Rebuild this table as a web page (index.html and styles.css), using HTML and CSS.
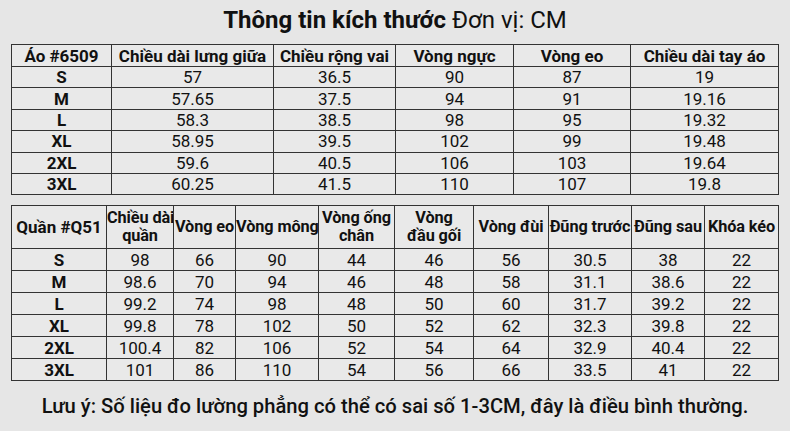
FILE: index.html
```html
<!DOCTYPE html>
<html lang="vi">
<head>
<meta charset="utf-8">
<link rel="stylesheet" href="styles.css">
</head>
<body>
<div class="page">
  <h1 class="title"><b>Thông tin kích thước</b> Đơn vị: CM</h1>

  <table class="size t1">
    <colgroup>
      <col class="a1"><col class="a2"><col class="a3"><col class="a4"><col class="a5"><col class="a6">
    </colgroup>
    <thead>
      <tr><th>Áo #6509</th><th>Chiều dài lưng giữa</th><th>Chiều rộng vai</th><th>Vòng ngực</th><th>Vòng eo</th><th>Chiều dài tay áo</th></tr>
    </thead>
    <tbody>
      <tr><th>S</th><td>57</td><td>36.5</td><td>90</td><td>87</td><td>19</td></tr>
      <tr><th>M</th><td>57.65</td><td>37.5</td><td>94</td><td>91</td><td>19.16</td></tr>
      <tr><th>L</th><td>58.3</td><td>38.5</td><td>98</td><td>95</td><td>19.32</td></tr>
      <tr><th>XL</th><td>58.95</td><td>39.5</td><td>102</td><td>99</td><td>19.48</td></tr>
      <tr><th>2XL</th><td>59.6</td><td>40.5</td><td>106</td><td>103</td><td>19.64</td></tr>
      <tr><th>3XL</th><td>60.25</td><td>41.5</td><td>110</td><td>107</td><td>19.8</td></tr>
    </tbody>
  </table>

  <table class="size t2">
    <colgroup>
      <col class="b1"><col class="b2"><col class="b3"><col class="b4"><col class="b5"><col class="b6"><col class="b7"><col class="b8"><col class="b9"><col class="b10">
    </colgroup>
    <thead>
      <tr><th class="lead">Quần #Q51</th><th>Chiều dài<br>quần</th><th>Vòng eo</th><th>Vòng mông</th><th>Vòng ống<br>chân</th><th>Vòng<br>đầu gối</th><th>Vòng đùi</th><th>Đũng trước</th><th>Đũng sau</th><th>Khóa kéo</th></tr>
    </thead>
    <tbody>
      <tr><th>S</th><td>98</td><td>66</td><td>90</td><td>44</td><td>46</td><td>56</td><td>30.5</td><td>38</td><td>22</td></tr>
      <tr><th>M</th><td>98.6</td><td>70</td><td>94</td><td>46</td><td>48</td><td>58</td><td>31.1</td><td>38.6</td><td>22</td></tr>
      <tr><th>L</th><td>99.2</td><td>74</td><td>98</td><td>48</td><td>50</td><td>60</td><td>31.7</td><td>39.2</td><td>22</td></tr>
      <tr><th>XL</th><td>99.8</td><td>78</td><td>102</td><td>50</td><td>52</td><td>62</td><td>32.3</td><td>39.8</td><td>22</td></tr>
      <tr><th>2XL</th><td>100.4</td><td>82</td><td>106</td><td>52</td><td>54</td><td>64</td><td>32.9</td><td>40.4</td><td>22</td></tr>
      <tr><th>3XL</th><td>101</td><td>86</td><td>110</td><td>54</td><td>56</td><td>66</td><td>33.5</td><td>41</td><td>22</td></tr>
    </tbody>
  </table>

  <p class="note">Lưu ý: Số liệu đo lường phẳng có thể có sai số 1-3CM, đây là điều bình thường.</p>
</div>
</body>
</html>
```

FILE: styles.css
```css
html, body {
  margin: 0;
  padding: 0;
  background: #e6e6e6;
}
body {
  font-family: Roboto, "Noto Sans", "DejaVu Sans", sans-serif;
  color: #111;
  width: 790px;
  height: 431px;
  overflow: hidden;
}
.page {
  display: flex;
  flex-direction: column;
  padding: 0 0 0 11px;
}
.title {
  margin: 0;
  height: 44px;
  box-sizing: border-box;
  padding-top: 5px;
  padding-right: 11px;
  text-align: center;
  font-size: 24px;
  font-weight: 400;
  line-height: 30px;
  color: #111;
}
.title b {
  font-weight: 700;
}
.size {
  border-collapse: collapse;
  table-layout: fixed;
  width: 768px;
  background: #e9e9e9;
  border: 1.5px solid #555;
}
.size th, .size td {
  border: 1px solid #333;
  padding: 0;
  text-align: center;
  white-space: nowrap;
  overflow: hidden;
}
.size th {
  font-weight: 700;
  font-size: 17px;
}
.size td {
  font-weight: 400;
  font-size: 17px;
}
.t1 tr { height: 21.4px; }
.t1 thead tr { height: 22px; }
.t1 th, .t1 td { line-height: 20px; }
.t2 {
  margin-top: 10px;
}
.t2 thead tr { height: 43px; }
.t2 tbody tr { height: 22px; }
.t2 th, .t2 td { line-height: 20px; }
.t2 thead th {
  font-size: 16.3px;
  line-height: 18px;
  letter-spacing: -0.1px;
}
.t2 thead th.lead {
  font-size: 17px;
  letter-spacing: 0;
}

.a1 { width: 100px; }
.a2 { width: 162px; }
.a3 { width: 122px; }
.a4 { width: 118px; }
.a5 { width: 117px; }
.a6 { width: 148px; }

.b1 { width: 95px; }
.b2 { width: 67px; }
.b3 { width: 62px; }
.b4 { width: 83px; }
.b5 { width: 76px; }
.b6 { width: 79px; }
.b7 { width: 75px; }
.b8 { width: 83px; }
.b9 { width: 73px; }
.b10 { width: 74px; }

.note {
  margin: 13px 0 0 0;
  padding-right: 11px;
  text-align: center;
  font-size: 20.2px;
  font-weight: 500;
  line-height: 24px;
  color: #111;
}
```
